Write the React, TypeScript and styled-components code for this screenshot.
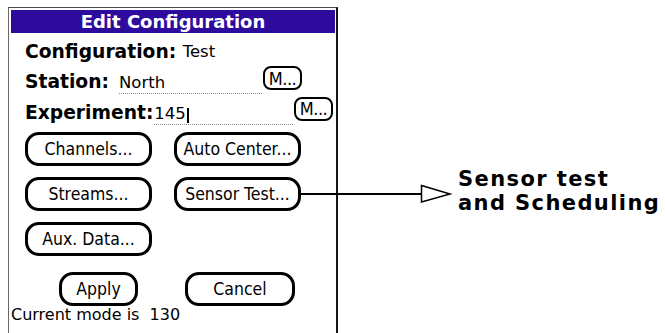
import styled, { createGlobalStyle } from "styled-components";

const GlobalStyle = createGlobalStyle`
    html, body {
        margin: 0;
        padding: 0;
        background: #FFFFFF;
        overflow: hidden;
    }
`;

const Page = styled.div`
    position: relative;
    display: flex;
    flex-direction: row;
    align-items: flex-start;
    width: 665px;
    height: 333px;
    padding: 7px 0 0 8px;
    box-sizing: border-box;
    overflow: hidden;
    background: #FFFFFF;
`;

const Panel = styled.div`
    width: 330px;
    height: 340px;
    flex: none;
    box-sizing: border-box;
    border-left: 1px solid #6a6a6a;
    border-top: 1px solid #4a4a4a;
    border-right: 2px solid #151515;
    padding: 2px 1px 0 2px;
    display: flex;
    flex-direction: column;
    font-family: "DejaVu Sans", "Liberation Sans", sans-serif;
    color: #000000;
`;

const TitleBar = styled.div`
    height: 23px;
    line-height: 23px;
    background-color: #2c0b9d;
    color: #FFFFFF;
    font-size: 18px;
    font-weight: bold;
    text-align: center;
`;

const Form = styled.div`
    display: flex;
    flex-direction: column;
    padding: 0 0 0 14px;
`;

const Row = styled.div<{ $endPad?: number }>`
    display: flex;
    flex-direction: row;
    align-items: flex-end;
    height: 30.5px;
    padding-right: ${(p) => p.$endPad ?? 0}px;
`;

const Label = styled.span`
    font-size: 18.7px;
    font-weight: bold;
    line-height: 24px;
    white-space: pre;
`;

const Value = styled.span`
    font-size: 16.5px;
    line-height: 24px;
    margin-bottom: -0.7px;
`;

const Field = styled.div<{ $gap: number }>`
    flex: 1;
    display: flex;
    align-items: flex-end;
    margin-left: ${(p) => p.$gap}px;
    font-size: 16.5px;
    line-height: 20px;
    border-bottom: 1px dotted #8a8a8a;
`;

const Cursor = styled.span`
    display: inline-block;
    width: 2px;
    height: 15px;
    margin-left: 1px;
    margin-bottom: 1px;
    background: #000000;
`;

const MenuButton = styled.div`
    flex: none;
    width: 39px;
    height: 24px;
    margin-left: 1px;
    margin-bottom: 4px;
    box-sizing: border-box;
    border: 2px solid #000000;
    border-radius: 8px;
    display: flex;
    align-items: center;
    justify-content: center;
    font-family: "DejaVu Sans Condensed", "DejaVu Sans", sans-serif;
    font-stretch: condensed;
    font-size: 18px;
    letter-spacing: -0.5px;
`;

const ButtonGrid = styled.div`
    display: grid;
    grid-template-columns: 127px 127px;
    grid-auto-rows: 34px;
    column-gap: 22px;
    row-gap: 11px;
    margin-top: 7.5px;
`;

const PalmButton = styled.div<{ $width?: number }>`
    width: ${(p) => (p.$width ? `${p.$width}px` : "auto")};
    height: 34px;
    box-sizing: border-box;
    border: 3px solid #000000;
    border-radius: 14px;
    display: flex;
    align-items: center;
    justify-content: center;
    font-family: "DejaVu Sans Condensed", "DejaVu Sans", sans-serif;
    font-stretch: condensed;
    font-size: 17.5px;
`;

const ActionRow = styled.div`
    display: flex;
    flex-direction: row;
    gap: 47px;
    margin: 16px 0 0 34px;
`;

const Status = styled.div`
    font-size: 16px;
    line-height: 18px;
    white-space: pre;
`;

const Callout = styled.div`
    margin: 160px 0 0 120px;
    font-family: "DejaVu Sans", "Liberation Sans", sans-serif;
    font-weight: bold;
    font-size: 21px;
    letter-spacing: 1.4px;
    line-height: 24px;
    color: #000000;
    white-space: nowrap;
`;

const Connector = styled.svg`
    position: absolute;
    left: 300px;
    top: 184px;
`;

export default function App() {
    return (
        <>
            <GlobalStyle />
            <Page>
                <Panel>
                    <TitleBar>Edit Configuration</TitleBar>
                    <Form>
                        <Row>
                            <Label>Configuration: </Label>
                            <Value>Test</Value>
                        </Row>
                        <Row $endPad={33}>
                            <Label>Station:</Label>
                            <Field $gap={10}>North</Field>
                            <MenuButton>M...</MenuButton>
                        </Row>
                        <Row $endPad={2}>
                            <Label>Experiment:</Label>
                            <Field $gap={1}>
                                145
                                <Cursor />
                            </Field>
                            <MenuButton>M...</MenuButton>
                        </Row>
                        <ButtonGrid>
                            <PalmButton>Channels...</PalmButton>
                            <PalmButton>Auto Center...</PalmButton>
                            <PalmButton>Streams...</PalmButton>
                            <PalmButton>Sensor Test...</PalmButton>
                            <PalmButton>Aux. Data...</PalmButton>
                        </ButtonGrid>
                        <ActionRow>
                            <PalmButton $width={79}>Apply</PalmButton>
                            <PalmButton $width={110}>Cancel</PalmButton>
                        </ActionRow>
                    </Form>
                    <Status>Current mode is  130</Status>
                </Panel>
                <Callout>
                    Sensor test
                    <br />
                    and Scheduling
                </Callout>
                <Connector width="154" height="20" viewBox="0 0 154 20">
                    <line x1="0" y1="10" x2="121.5" y2="10" stroke="#000" strokeWidth="2" />
                    <polygon points="121.5,1.5 150,10 121.5,18" fill="#fff" stroke="#000" strokeWidth="1.5" />
                </Connector>
            </Page>
        </>
    );
}
